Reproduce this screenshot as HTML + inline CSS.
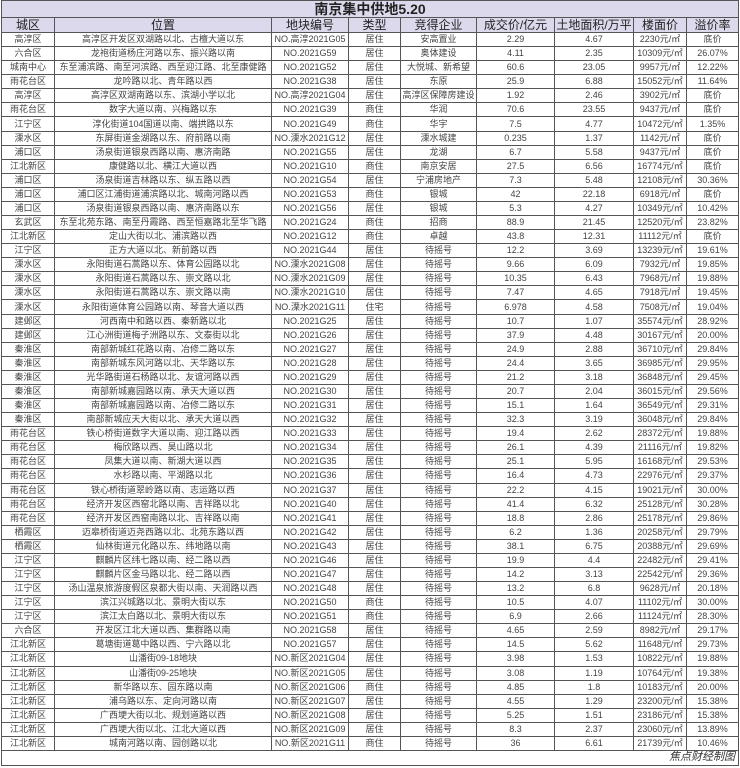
<!DOCTYPE html>
<html><head><meta charset="utf-8">
<style>
body{margin:0;background:#fff;width:740px;height:768px;overflow:hidden;font-family:"Liberation Sans","Noto Sans CJK SC",sans-serif;}
.wrap{position:absolute;left:1px;top:0;width:737px;}
table{border-collapse:collapse;table-layout:fixed;width:737px;}
td{border:1px solid #555;padding:0;text-align:center;font-size:9px;color:#444;height:13.08px;line-height:13px;white-space:nowrap;overflow:hidden;}
tr.t td{background:#dcd9ec;font-size:14px;font-weight:bold;color:#222;height:16px;line-height:16px;}
tr.h td{background:#dcd9ec;font-size:12px;color:#222;height:14px;line-height:14px;}
tr.f td{height:14px;text-align:right;font-style:italic;font-size:11px;color:#333;padding-right:3px;}
</style></head><body>
<div class="wrap">
<table>
<colgroup><col style="width:53px"><col style="width:217px"><col style="width:77px"><col style="width:52px"><col style="width:76px"><col style="width:78px"><col style="width:79px"><col style="width:53px"><col style="width:52px"></colgroup>
<tr class="t"><td colspan="9">南京集中供地5.20</td></tr>
<tr class="h"><td>城区</td><td>位置</td><td>地块编号</td><td>类型</td><td>竞得企业</td><td>成交价/亿元</td><td>土地面积/万平</td><td>楼面价</td><td>溢价率</td></tr>
<tr><td>高淳区</td><td>高淳区开发区双湖路以北、古檀大道以东</td><td>NO.高淳2021G05</td><td>居住</td><td>安高置业</td><td>2.29</td><td>4.67</td><td>2230元/㎡</td><td>底价</td></tr>
<tr><td>六合区</td><td>龙袍街道杨庄河路以东、振兴路以南</td><td>NO.2021G59</td><td>居住</td><td>奥体建设</td><td>4.11</td><td>2.35</td><td>10309元/㎡</td><td>26.07%</td></tr>
<tr><td>城南中心</td><td>东至浦滨路、南至河滨路、西至迎江路、北至康健路</td><td>NO.2021G52</td><td>居住</td><td>大悦城、新希望</td><td>60.6</td><td>23.05</td><td>9957元/㎡</td><td>12.22%</td></tr>
<tr><td>雨花台区</td><td>龙吟路以北、青年路以西</td><td>NO.2021G38</td><td>居住</td><td>东原</td><td>25.9</td><td>6.88</td><td>15052元/㎡</td><td>11.64%</td></tr>
<tr><td>高淳区</td><td>高淳区双湖南路以东、滨湖小学以北</td><td>NO.高淳2021G04</td><td>居住</td><td>高淳区保障房建设</td><td>1.92</td><td>2.46</td><td>3902元/㎡</td><td>底价</td></tr>
<tr><td>雨花台区</td><td>数字大道以南、兴梅路以东</td><td>NO.2021G39</td><td>商住</td><td>华润</td><td>70.6</td><td>23.55</td><td>9437元/㎡</td><td>底价</td></tr>
<tr><td>江宁区</td><td>淳化街道104国道以南、端拱路以东</td><td>NO.2021G49</td><td>商住</td><td>华宇</td><td>7.5</td><td>4.77</td><td>10472元/㎡</td><td>1.35%</td></tr>
<tr><td>溧水区</td><td>东屏街道金湖路以东、府前路以南</td><td>NO.溧水2021G12</td><td>居住</td><td>溧水城建</td><td>0.235</td><td>1.37</td><td>1142元/㎡</td><td>底价</td></tr>
<tr><td>浦口区</td><td>汤泉街道银泉西路以南、惠济南路</td><td>NO.2021G55</td><td>居住</td><td>龙湖</td><td>6.7</td><td>5.58</td><td>9437元/㎡</td><td>底价</td></tr>
<tr><td>江北新区</td><td>康健路以北、横江大道以西</td><td>NO.2021G10</td><td>商住</td><td>南京安居</td><td>27.5</td><td>6.56</td><td>16774元/㎡</td><td>底价</td></tr>
<tr><td>浦口区</td><td>汤泉街道吉林路以东、纵五路以西</td><td>NO.2021G54</td><td>居住</td><td>宁浦房地产</td><td>7.3</td><td>5.48</td><td>12108元/㎡</td><td>30.36%</td></tr>
<tr><td>浦口区</td><td>浦口区江浦街道浦滨路以北、城南河路以西</td><td>NO.2021G53</td><td>商住</td><td>银城</td><td>42</td><td>22.18</td><td>6918元/㎡</td><td>底价</td></tr>
<tr><td>浦口区</td><td>汤泉街道银泉西路以南、惠济南路以东</td><td>NO.2021G56</td><td>居住</td><td>银城</td><td>5.3</td><td>4.27</td><td>10349元/㎡</td><td>10.42%</td></tr>
<tr><td>玄武区</td><td>东至北苑东路、南至丹霞路、西至恒嘉路北至华飞路</td><td>NO.2021G24</td><td>商住</td><td>招商</td><td>88.9</td><td>21.45</td><td>12520元/㎡</td><td>23.82%</td></tr>
<tr><td>江北新区</td><td>定山大街以北、浦滨路以西</td><td>NO.2021G12</td><td>商住</td><td>卓越</td><td>43.8</td><td>12.31</td><td>11112元/㎡</td><td>底价</td></tr>
<tr><td>江宁区</td><td>正方大道以北、新前路以西</td><td>NO.2021G44</td><td>居住</td><td>待摇号</td><td>12.2</td><td>3.69</td><td>13239元/㎡</td><td>19.61%</td></tr>
<tr><td>溧水区</td><td>永阳街道石蒿路以东、体育公园路以北</td><td>NO.溧水2021G08</td><td>居住</td><td>待摇号</td><td>9.66</td><td>6.09</td><td>7932元/㎡</td><td>19.85%</td></tr>
<tr><td>溧水区</td><td>永阳街道石蒿路以东、崇文路以北</td><td>NO.溧水2021G09</td><td>居住</td><td>待摇号</td><td>10.35</td><td>6.43</td><td>7968元/㎡</td><td>19.88%</td></tr>
<tr><td>溧水区</td><td>永阳街道石蒿路以东、崇文路以南</td><td>NO.溧水2021G10</td><td>居住</td><td>待摇号</td><td>7.47</td><td>4.65</td><td>7918元/㎡</td><td>19.45%</td></tr>
<tr><td>溧水区</td><td>永阳街道体育公园路以南、琴音大道以西</td><td>NO.溧水2021G11</td><td>住宅</td><td>待摇号</td><td>6.978</td><td>4.58</td><td>7508元/㎡</td><td>19.04%</td></tr>
<tr><td>建邺区</td><td>河西南中和路以西、秦新路以北</td><td>NO.2021G25</td><td>居住</td><td>待摇号</td><td>10.7</td><td>1.07</td><td>35574元/㎡</td><td>28.92%</td></tr>
<tr><td>建邺区</td><td>江心洲街道梅子洲路以东、文泰街以北</td><td>NO.2021G26</td><td>居住</td><td>待摇号</td><td>37.9</td><td>4.48</td><td>30167元/㎡</td><td>20.00%</td></tr>
<tr><td>秦淮区</td><td>南部新城红花路以南、冶修二路以东</td><td>NO.2021G27</td><td>居住</td><td>待摇号</td><td>24.9</td><td>2.88</td><td>36710元/㎡</td><td>29.84%</td></tr>
<tr><td>秦淮区</td><td>南部新城东风河路以北、天华路以东</td><td>NO.2021G28</td><td>居住</td><td>待摇号</td><td>24.4</td><td>3.65</td><td>36985元/㎡</td><td>29.95%</td></tr>
<tr><td>秦淮区</td><td>光华路街道石杨路以北、友谊河路以西</td><td>NO.2021G29</td><td>居住</td><td>待摇号</td><td>21.2</td><td>3.18</td><td>36848元/㎡</td><td>29.45%</td></tr>
<tr><td>秦淮区</td><td>南部新城嘉园路以南、承天大道以西</td><td>NO.2021G30</td><td>居住</td><td>待摇号</td><td>20.7</td><td>2.04</td><td>36015元/㎡</td><td>29.56%</td></tr>
<tr><td>秦淮区</td><td>南部新城嘉园路以南、冶修二路以东</td><td>NO.2021G31</td><td>居住</td><td>待摇号</td><td>15.1</td><td>1.64</td><td>36549元/㎡</td><td>29.31%</td></tr>
<tr><td>秦淮区</td><td>南部新城应天大街以北、承天大道以西</td><td>NO.2021G32</td><td>居住</td><td>待摇号</td><td>32.3</td><td>3.19</td><td>36048元/㎡</td><td>29.84%</td></tr>
<tr><td>雨花台区</td><td>铁心桥街道数字大道以南、迎江路以西</td><td>NO.2021G33</td><td>居住</td><td>待摇号</td><td>19.4</td><td>2.62</td><td>28372元/㎡</td><td>19.88%</td></tr>
<tr><td>雨花台区</td><td>梅欣路以西、昊山路以北</td><td>NO.2021G34</td><td>居住</td><td>待摇号</td><td>26.1</td><td>4.39</td><td>21116元/㎡</td><td>19.82%</td></tr>
<tr><td>雨花台区</td><td>凤集大道以南、新湖大道以西</td><td>NO.2021G35</td><td>居住</td><td>待摇号</td><td>25.1</td><td>5.95</td><td>16168元/㎡</td><td>29.53%</td></tr>
<tr><td>雨花台区</td><td>水杉路以南、平湖路以北</td><td>NO.2021G36</td><td>居住</td><td>待摇号</td><td>16.4</td><td>4.73</td><td>22976元/㎡</td><td>29.37%</td></tr>
<tr><td>雨花台区</td><td>铁心桥街道翠岭路以南、志运路以西</td><td>NO.2021G37</td><td>居住</td><td>待摇号</td><td>22.2</td><td>4.15</td><td>19021元/㎡</td><td>30.00%</td></tr>
<tr><td>雨花台区</td><td>经济开发区西窑北路以南、吉祥路以北</td><td>NO.2021G40</td><td>居住</td><td>待摇号</td><td>41.4</td><td>6.32</td><td>25128元/㎡</td><td>30.28%</td></tr>
<tr><td>雨花台区</td><td>经济开发区西窑南路以北、吉祥路以南</td><td>NO.2021G41</td><td>居住</td><td>待摇号</td><td>18.8</td><td>2.86</td><td>25178元/㎡</td><td>29.86%</td></tr>
<tr><td>栖霞区</td><td>迈皋桥街道迈尧西路以北、北苑东路以西</td><td>NO.2021G42</td><td>居住</td><td>待摇号</td><td>6.2</td><td>1.36</td><td>20258元/㎡</td><td>29.79%</td></tr>
<tr><td>栖霞区</td><td>仙林街道元化路以东、纬地路以南</td><td>NO.2021G43</td><td>居住</td><td>待摇号</td><td>38.1</td><td>6.75</td><td>20388元/㎡</td><td>29.69%</td></tr>
<tr><td>江宁区</td><td>麒麟片区纬七路以南、经二路以西</td><td>NO.2021G46</td><td>居住</td><td>待摇号</td><td>19.9</td><td>4.4</td><td>22482元/㎡</td><td>29.41%</td></tr>
<tr><td>江宁区</td><td>麒麟片区金马路以北、经二路以西</td><td>NO.2021G47</td><td>居住</td><td>待摇号</td><td>14.2</td><td>3.13</td><td>22542元/㎡</td><td>29.36%</td></tr>
<tr><td>江宁区</td><td>汤山温泉旅游度假区泉都大街以南、天润路以西</td><td>NO.2021G48</td><td>居住</td><td>待摇号</td><td>13.2</td><td>6.8</td><td>9628元/㎡</td><td>20.18%</td></tr>
<tr><td>江宁区</td><td>滨江兴城路以北、景明大街以东</td><td>NO.2021G50</td><td>商住</td><td>待摇号</td><td>10.5</td><td>4.07</td><td>11102元/㎡</td><td>30.00%</td></tr>
<tr><td>江宁区</td><td>滨江太白路以北、景明大街以东</td><td>NO.2021G51</td><td>商住</td><td>待摇号</td><td>6.9</td><td>2.66</td><td>11124元/㎡</td><td>28.30%</td></tr>
<tr><td>六合区</td><td>开发区江北大道以西、集群路以南</td><td>NO.2021G58</td><td>居住</td><td>待摇号</td><td>4.65</td><td>2.59</td><td>8982元/㎡</td><td>29.17%</td></tr>
<tr><td>江北新区</td><td>葛塘街道葛中路以西、宁六路以北</td><td>NO.2021G57</td><td>居住</td><td>待摇号</td><td>14.5</td><td>5.62</td><td>11648元/㎡</td><td>29.73%</td></tr>
<tr><td>江北新区</td><td>山潘街09-18地块</td><td>NO.新区2021G04</td><td>居住</td><td>待摇号</td><td>3.98</td><td>1.53</td><td>10822元/㎡</td><td>19.88%</td></tr>
<tr><td>江北新区</td><td>山潘街09-25地块</td><td>NO.新区2021G05</td><td>居住</td><td>待摇号</td><td>3.08</td><td>1.19</td><td>10764元/㎡</td><td>19.38%</td></tr>
<tr><td>江北新区</td><td>新华路以东、园东路以南</td><td>NO.新区2021G06</td><td>商住</td><td>待摇号</td><td>4.85</td><td>1.8</td><td>10183元/㎡</td><td>20.00%</td></tr>
<tr><td>江北新区</td><td>浦乌路以东、定向河路以南</td><td>NO.新区2021G07</td><td>居住</td><td>待摇号</td><td>4.55</td><td>1.29</td><td>23200元/㎡</td><td>15.38%</td></tr>
<tr><td>江北新区</td><td>广西埂大街以北、规划道路以西</td><td>NO.新区2021G08</td><td>居住</td><td>待摇号</td><td>5.25</td><td>1.51</td><td>23186元/㎡</td><td>15.38%</td></tr>
<tr><td>江北新区</td><td>广西埂大街以北、江北大道以西</td><td>NO.新区2021G09</td><td>居住</td><td>待摇号</td><td>8.3</td><td>2.37</td><td>23060元/㎡</td><td>13.89%</td></tr>
<tr><td>江北新区</td><td>城南河路以南、园创路以北</td><td>NO.新区2021G11</td><td>商住</td><td>待摇号</td><td>36</td><td>6.61</td><td>21739元/㎡</td><td>10.46%</td></tr>
<tr class="f"><td colspan="9">焦点财经制图</td></tr>
</table>
</div>
</body></html>
